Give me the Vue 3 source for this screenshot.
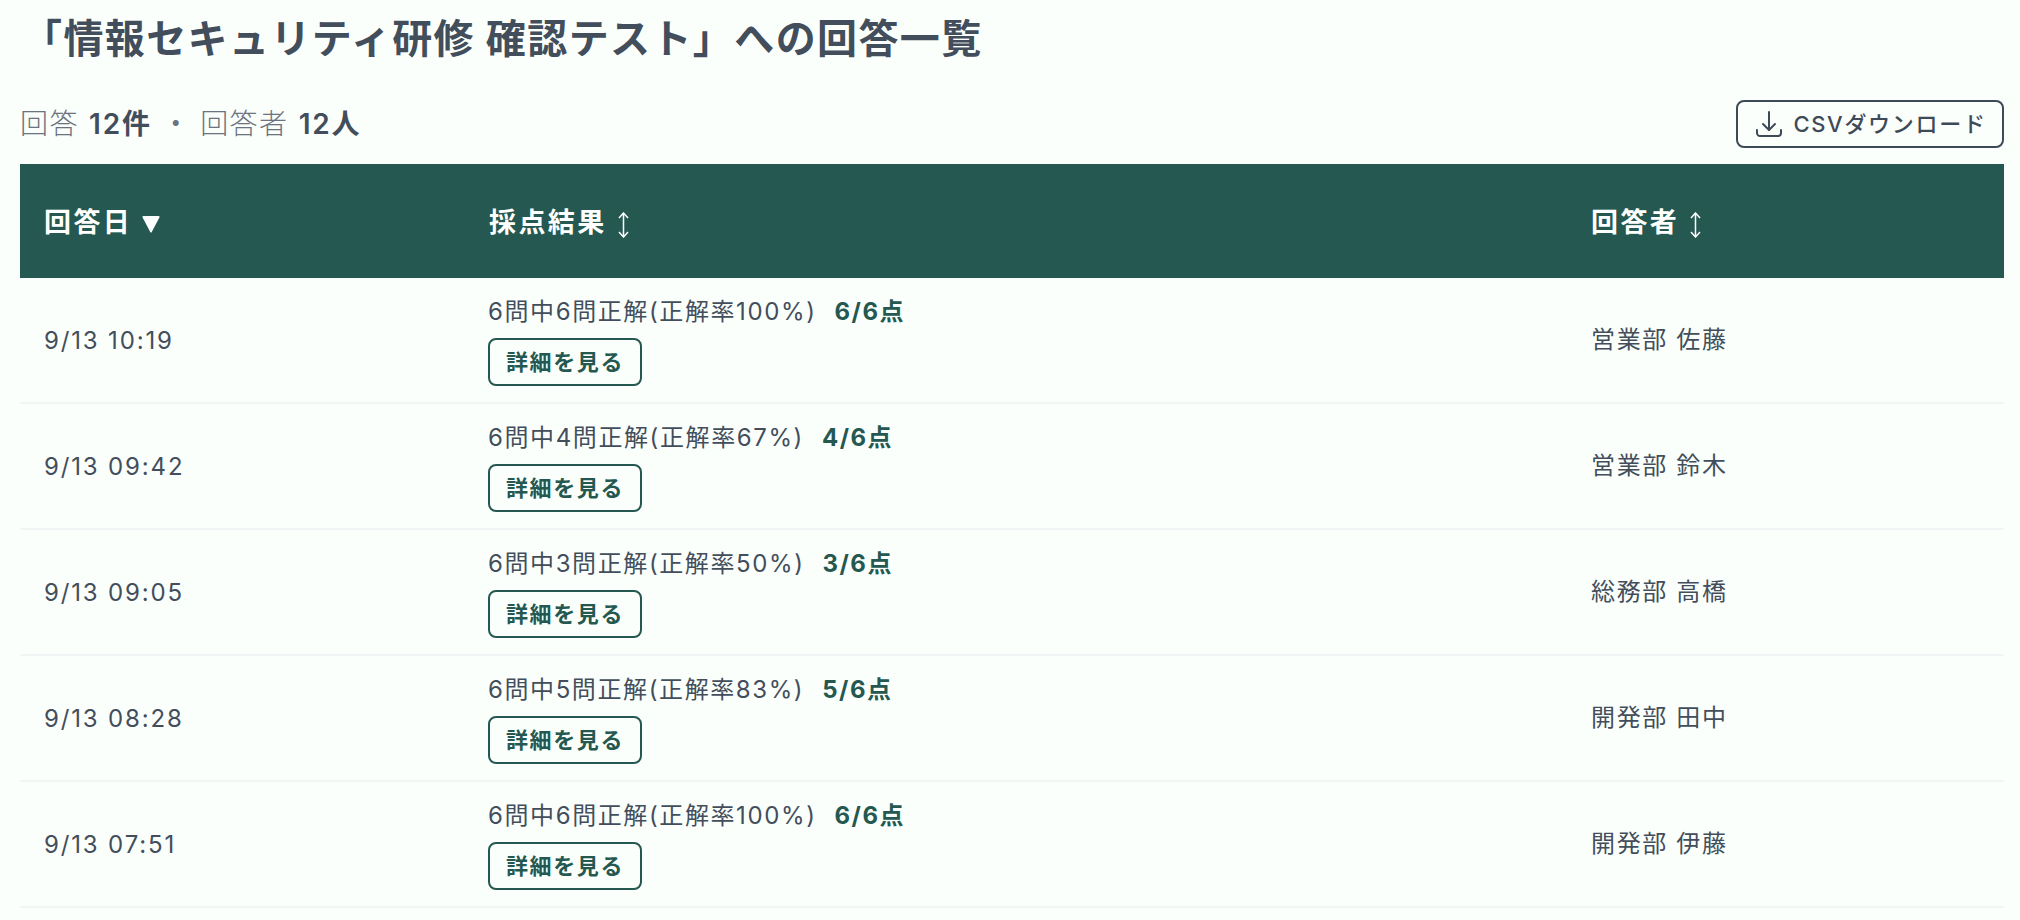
<script setup>
const rows = [
  { date: '9/13 10:19', text: '6問中6問正解(正解率100%)', score: '6/6点', user: '営業部 佐藤' },
  { date: '9/13 09:42', text: '6問中4問正解(正解率67%)', score: '4/6点', user: '営業部 鈴木' },
  { date: '9/13 09:05', text: '6問中3問正解(正解率50%)', score: '3/6点', user: '総務部 高橋' },
  { date: '9/13 08:28', text: '6問中5問正解(正解率83%)', score: '5/6点', user: '開発部 田中' },
  { date: '9/13 07:51', text: '6問中6問正解(正解率100%)', score: '6/6点', user: '開発部 伊藤' },
]
</script>

<template>
  <div class="page">
    <h1 class="title">「情報セキュリティ研修 確認テスト」への回答一覧</h1>
    <div class="bar">
      <div class="stats">
        <span class="muted">回答</span> <b>12件</b><span class="dot">・</span><span class="muted">回答者</span> <b>12人</b>
      </div>
      <button class="csv">
        <svg class="dl" viewBox="0 0 24 24" fill="none" stroke="currentColor" stroke-width="1.5" stroke-linecap="round" stroke-linejoin="round">
          <path d="M3 16.5v2.25A2.25 2.25 0 0 0 5.25 21h13.5A2.25 2.25 0 0 0 21 18.75V16.5" />
          <path d="M16.5 12L12 16.5 7.5 12" />
          <path d="M12 16.5V3" />
        </svg>
        CSVダウンロード
      </button>
    </div>
    <table class="table">
      <colgroup>
        <col class="c1" /><col class="c2" /><col class="c3" />
      </colgroup>
      <thead>
        <tr>
          <th>回答日<svg class="tri" viewBox="0 0 18 18"><path d="M1.5 1h15a1 1 0 0 1 .9 1.4L10 16.6a1 1 0 0 1-2 0L.6 2.4A1 1 0 0 1 1.5 1z" fill="currentColor" /></svg></th>
          <th class="col2">採点結果<svg class="updown" viewBox="0 0 11 26" fill="none" stroke="currentColor" stroke-width="1.5"><path d="M5.5 1v24M1 6l4.5-5L10 6M1 20l4.5 5 4.5-5" /></svg></th>
          <th>回答者<svg class="updown" viewBox="0 0 11 26" fill="none" stroke="currentColor" stroke-width="1.5"><path d="M5.5 1v24M1 6l4.5-5L10 6M1 20l4.5 5 4.5-5" /></svg></th>
        </tr>
      </thead>
      <tbody>
        <tr v-for="r in rows" :key="r.date">
          <td class="date">{{ r.date }}</td>
          <td>
            <div class="result"><span class="rtext">{{ r.text }}</span><strong>{{ r.score }}</strong></div>
            <button class="detail">詳細を見る</button>
          </td>
          <td class="user">{{ r.user }}</td>
        </tr>
      </tbody>
    </table>
  </div>
</template>

<style>
html, body { background: #fbfffb; }
</style>

<style scoped>
.page {
  width: 2020px;
  height: 920px;
  overflow: hidden;
  box-sizing: border-box;
  padding: 0 16px 0 20px;
  font-family: Inter, "Noto Sans CJK JP", sans-serif;
  color: #434e5c;
  background: #fbfffb;
}
.title {
  margin: 0;
  padding: 13px 0 0 2px;
  height: 52px;
  font-size: 40px;
  line-height: 52px;
  font-weight: 700;
  letter-spacing: 1.4px;
}
.bar {
  display: flex;
  align-items: center;
  justify-content: space-between;
  margin-top: 35px;
  height: 48px;
}
.stats {
  font-size: 28px;
  letter-spacing: 1.4px;
  line-height: 48px;
  height: 48px;
}
.stats b { font-weight: 600; letter-spacing: 1.8px; margin-left: 1px; }
.muted { color: #6b7280; font-weight: 300; }
.dot { margin: 0 9px 0 10px; color: #6b7280; }
.csv {
  display: flex;
  align-items: center;
  justify-content: center;
  gap: 8px;
  width: 268px;
  height: 48px;
  border: 2px solid #3f4a58;
  border-radius: 8px;
  background: transparent;
  color: #3f4a58;
  font: 500 22px/40px Inter, "Noto Sans CJK JP", sans-serif;
  letter-spacing: 1.7px;
  padding: 0;
}
.dl { width: 32px; height: 32px; }
.table {
  width: 1984px;
  margin-top: 16px;
  border-collapse: separate;
  border-spacing: 0;
  table-layout: fixed;
}
.c1 { width: 444px; }
.c2 { width: 1103px; }
.c3 { width: 437px; }
th {
  height: 114px;
  padding: 0 24px 2px;
  box-sizing: border-box;
  background: #245850;
  color: #fff;
  text-align: left;
  font-size: 27px;
  font-weight: 600;
  letter-spacing: 2.4px;
}
th.col2 { padding-left: 25px; }
.tri { width: 18px; height: 18px; margin-left: 10px; vertical-align: -1px; }
.updown { width: 11px; height: 26px; margin-left: 11px; vertical-align: -6px; }
td {
  height: 126px;
  padding: 16px 24px;
  box-sizing: border-box;
  border-bottom: 2px solid #f3f4f6;
  font-size: 24px;
  line-height: 36px;
  font-weight: 400;
  vertical-align: middle;
}
td.date { padding-top: 18px; letter-spacing: 1.85px; }
td.user { letter-spacing: 1.65px; }
.result {
  display: flex;
  gap: 18px;
  line-height: 36px;
}
.rtext { letter-spacing: 1.6px; }
.result strong {
  color: #245850;
  font-weight: 700;
  letter-spacing: 1.5px;
}
.detail {
  display: block;
  width: 154px;
  height: 48px;
  margin-top: 8px;
  padding: 0 0 4px;
  border: 2px solid #245850;
  border-radius: 8px;
  background: transparent;
  color: #245850;
  font: 600 22px Inter, "Noto Sans CJK JP", sans-serif;
  letter-spacing: 1.6px;
}
</style>
